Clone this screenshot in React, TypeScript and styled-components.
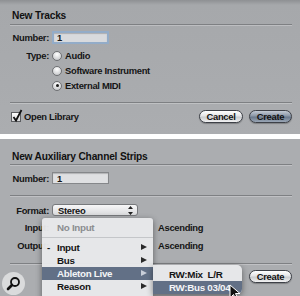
import React from 'react';
import styled, { createGlobalStyle } from 'styled-components';

const GlobalStyle = createGlobalStyle`
    html, body {
        margin: 0;
        padding: 0;
        background: #ffffff;
    }
    body {
        font-family: "Liberation Sans", Arial, sans-serif;
        font-weight: bold;
        font-size: 9.4px;
        letter-spacing: -0.3px;
        color: #151515;
    }
`;

const Page = styled.div`
    position: relative;
    width: 300px;
    height: 296px;
    overflow: hidden;
    display: flex;
    flex-direction: column;
    gap: 5px;
    background: #ffffff;
`;

const Panel = styled.div<{ $height: number; $top?: boolean }>`
    position: relative;
    box-sizing: border-box;
    height: ${p => p.$height}px;
    flex-shrink: 0;
    padding: ${p => (p.$top ? 9 : 11)}px 8px 0 10px;
    background: ${p => (p.$top
        ? 'linear-gradient(#8e9093 0, #a6a8ab 5px, #abadb0 100%)'
        : '#abadb0')};
`;

const Title = styled.div`
    font-size: 10.2px;
    letter-spacing: -0.2px;
    line-height: 13px;
    padding-left: 2px;
    color: #111;
`;

const Rule = styled.div<{ $mt: number }>`
    margin-top: ${p => p.$mt}px;
    height: 1px;
    background: #7e8083;
    box-shadow: 0 1px 0 rgba(255, 255, 255, 0.25);
`;

const Row = styled.div<{ $mt?: number; $h: number }>`
    display: flex;
    align-items: center;
    margin-top: ${p => p.$mt || 0}px;
    height: ${p => p.$h}px;
`;

const Label = styled.div`
    width: 39px;
    text-align: right;
    margin-right: 3px;
    white-space: nowrap;
`;

const NumberBox = styled.div<{ $focus?: boolean }>`
    box-sizing: border-box;
    width: 57px;
    height: 100%;
    display: flex;
    align-items: center;
    padding-left: ${p => (p.$focus ? 3 : 4)}px;
    background: ${p => (p.$focus ? '#d8dadd' : '#dfe0e2')};
    border: ${p => (p.$focus ? '2px solid #93acc8' : '1px solid #85878a')};
    box-shadow: inset 0 1px 1px rgba(0, 0, 0, 0.2);
`;

const RadioRow = styled.div`
    display: flex;
    align-items: center;
    height: 15px;
    padding-left: 42px;
    gap: 3px;
`;

const RadioText = styled.span`
    margin-left: 3px;
`;

const Radio = styled.div<{ $on?: boolean }>`
    position: relative;
    box-sizing: border-box;
    width: 10px;
    height: 10px;
    border-radius: 50%;
    border: 1px solid #6f7174;
    background: radial-gradient(circle at 50% 30%, #ffffff 0, #d7d8da 60%, #b8babd 100%);

    &::after {
        content: '';
        display: ${p => (p.$on ? 'block' : 'none')};
        position: absolute;
        left: 2.5px;
        top: 2.5px;
        width: 3px;
        height: 3px;
        border-radius: 50%;
        background: #1a1a1a;
    }
`;

const Footer = styled.div<{ $mt: number }>`
    display: flex;
    align-items: flex-start;
    justify-content: space-between;
    margin-top: ${p => p.$mt}px;
    height: 14px;
`;

const CheckLabel = styled.div`
    display: flex;
    align-items: center;
    height: 13px;
    gap: 3px;
    padding-left: 1px;
`;

const CheckBox = styled.div`
    position: relative;
    box-sizing: border-box;
    width: 10px;
    height: 10px;
    border: 1px solid #5c5e61;
    background: linear-gradient(#ffffff, #d6d7d9);

    svg {
        position: absolute;
        left: -1px;
        top: -4px;
    }
`;

const Buttons = styled.div`
    display: flex;
    gap: 6px;
`;

const Pill = styled.div<{ $primary?: boolean; $w: number }>`
    box-sizing: border-box;
    width: ${p => p.$w}px;
    height: 13px;
    display: flex;
    align-items: center;
    justify-content: center;
    border-radius: 7px;
    border: 1px solid #3d4047;
    box-shadow: 0 1px 1px rgba(0, 0, 0, 0.25);
    background: ${p => (p.$primary
        ? 'linear-gradient(#c3cad4 0, #8b97a7 45%, #6a788b 55%, #9aa6b5 100%)'
        : 'linear-gradient(#ffffff 0, #e4e5e7 45%, #c9cbce 55%, #f2f2f3 100%)')};
    color: #111;
`;

const Popup = styled.div`
    box-sizing: border-box;
    width: 86px;
    height: 12px;
    display: flex;
    align-items: center;
    justify-content: space-between;
    padding: 0 4px 0 5px;
    border: 1px solid #77797c;
    border-radius: 3px;
    background: linear-gradient(#f7f7f8, #d9dadc);
`;

const Spacer = styled.div`
    width: 86px;
    flex-shrink: 0;
`;

const Value = styled.div`
    margin-left: 20px;
`;

const SearchButton = styled.div`
    width: 23px;
    height: 23px;
    margin: 2px 0 0 -8px;
    border-radius: 50%;
    background: #dadbdc;
    display: flex;
    align-items: center;
    justify-content: center;
`;

const Menu = styled.div`
    position: absolute;
    left: 42px;
    top: 79px;
    width: 111px;
    height: 90px;
    padding-top: 3px;
    box-sizing: border-box;
    background: rgba(232, 233, 235, 0.96);
    box-shadow: 0 2px 6px rgba(0, 0, 0, 0.45);
    border-radius: 3px 3px 0 0;
`;

const SubMenu = styled.div`
    position: absolute;
    left: 153px;
    top: 126px;
    width: 89px;
    height: 29px;
    padding-top: 3px;
    box-sizing: border-box;
    overflow: hidden;
    background: rgba(232, 233, 235, 0.96);
    box-shadow: 0 2px 6px rgba(0, 0, 0, 0.45);
    border-radius: 0 5px 5px 0;
`;

const Item = styled.div<{ $active?: boolean; $dim?: boolean; $pad: number }>`
    position: relative;
    height: 13px;
    line-height: 13px;
    font-size: 9.8px;
    padding-left: ${p => p.$pad}px;
    white-space: pre;
    color: ${p => (p.$dim ? '#8b8d90' : p.$active ? '#f4f5f7' : '#151515')};
    background: ${p => (p.$active ? '#627086' : 'transparent')};
`;

const Mark = styled.span`
    position: absolute;
    left: 5px;
`;

const Arrow = styled.span<{ $active?: boolean }>`
    position: absolute;
    right: 6px;
    top: 3px;
    width: 0;
    height: 0;
    border-top: 3.5px solid transparent;
    border-bottom: 3.5px solid transparent;
    border-left: 6px solid ${p => (p.$active ? '#c8ced8' : '#2a2a2a')};
`;

const MenuRule = styled.div`
    height: 1px;
    margin: 3px 0 3px;
    background: #c4c6c9;
`;

const Cursor = styled.svg`
    position: absolute;
    left: 229px;
    top: 284px;
`;

const UpDown = () => (
    <svg width="5" height="9" viewBox="0 0 5 9">
        <path d="M2.5 0 L5 3 L0 3 Z M2.5 9 L5 6 L0 6 Z" fill="#222" />
    </svg>
);

const menuItems = [
    { label: 'Input', mark: '-' },
    { label: 'Bus' },
    { label: 'Ableton Live', active: true },
    { label: 'Reason' }
];

const App: React.FC = () => {
    return (
        <Page>
            <GlobalStyle />
            <Panel $height={134} $top>
                <Title>New Tracks</Title>
                <Rule $mt={2} />
                <Row $mt={6} $h={13}>
                    <Label>Number:</Label>
                    <NumberBox $focus>1</NumberBox>
                </Row>
                <Row $mt={4} $h={15}>
                    <Label>Type:</Label>
                    <Radio />
                    <RadioText>Audio</RadioText>
                </Row>
                <RadioRow>
                    <Radio />
                    Software Instrument
                </RadioRow>
                <RadioRow>
                    <Radio $on />
                    External MIDI
                </RadioRow>
                <Rule $mt={9} />
                <Footer $mt={7}>
                    <CheckLabel>
                        <CheckBox>
                            <svg width="12" height="14" viewBox="0 0 12 14">
                                <path d="M2.5 8 L5 11.5 L10.5 1" fill="none" stroke="#111" strokeWidth="1.8" />
                            </svg>
                        </CheckBox>
                        Open Library
                    </CheckLabel>
                    <Buttons>
                        <Pill $w={44}>Cancel</Pill>
                        <Pill $w={43} $primary>Create</Pill>
                    </Buttons>
                </Footer>
            </Panel>
            <Panel $height={157}>
                <Title>New Auxiliary Channel Strips</Title>
                <Rule $mt={1} />
                <Row $mt={7} $h={12}>
                    <Label>Number:</Label>
                    <NumberBox>1</NumberBox>
                </Row>
                <Rule $mt={11} />
                <Row $mt={8} $h={12}>
                    <Label>Format:</Label>
                    <Popup>
                        Stereo
                        <UpDown />
                    </Popup>
                </Row>
                <Row $mt={4} $h={14}>
                    <Label>Input:</Label>
                    <Spacer />
                    <Value>Ascending</Value>
                </Row>
                <Row $mt={4} $h={14}>
                    <Label>Output:</Label>
                    <Spacer />
                    <Value>Ascending</Value>
                </Row>
                <Rule $mt={11} />
                <Footer $mt={6}>
                    <SearchButton>
                        <svg width="15" height="15" viewBox="0 0 15 15">
                            <circle cx="9" cy="6" r="4" fill="none" stroke="#111" strokeWidth="1.8" />
                            <path d="M6 9 L2 13" stroke="#111" strokeWidth="2.6" strokeLinecap="round" />
                        </svg>
                    </SearchButton>
                    <Pill $w={43}>Create</Pill>
                </Footer>
                <Menu>
                    <Item $pad={15} $dim>No Input</Item>
                    <MenuRule />
                    {menuItems.map(item => (
                        <Item key={item.label} $pad={15} $active={item.active}>
                            {item.mark && <Mark>{item.mark}</Mark>}
                            {item.label}
                            <Arrow $active={item.active} />
                        </Item>
                    ))}
                </Menu>
                <SubMenu>
                    <Item $pad={16}>RW:Mix  L/R</Item>
                    <Item $pad={16} $active>RW:Bus 03/04</Item>
                </SubMenu>
            </Panel>
            <Cursor width="14" height="16" viewBox="0 0 14 16">
                <path d="M1 1 L1 14 L4.5 10.5 L7 16 L9 15 L6.5 9.5 L11 9.5 Z" fill="#111" stroke="#fff" strokeWidth="1" />
            </Cursor>
        </Page>
    );
};

export default App;
